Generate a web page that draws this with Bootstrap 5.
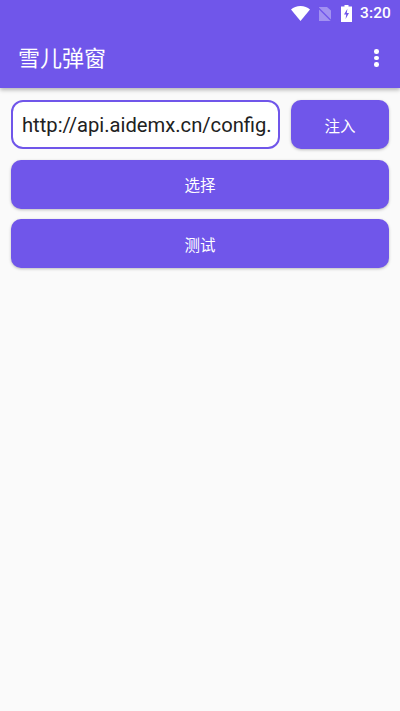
<!DOCTYPE html>
<html lang="zh">
<head>
<meta charset="utf-8">
<title>雪儿弹窗</title>
<link href="https://cdn.jsdelivr.net/npm/bootstrap@5.3.0/dist/css/bootstrap.min.css" rel="stylesheet">
<style>
html,body{height:100%}
body{background:#fafafa;font-family:Roboto,"Noto Sans CJK SC",sans-serif;overflow:hidden}
.app-shell{height:711px}
.app-top{background:#7056ea;height:88px;box-shadow:0 2px 4px rgba(0,0,0,.28);position:relative}
.stat-row{height:27px;padding-right:9px;color:#fff;font-size:15.5px;font-weight:500;letter-spacing:.1px}
.stat-row svg{display:block}
.stat-time{margin-left:8px;line-height:27px}
.tool-row{height:61px;padding:0 21.5px 0 18px}
.app-title{font-size:22px;color:#fff;font-family:"Noto Sans CJK SC",sans-serif;font-weight:400;line-height:1;margin-top:-4px}
.more-dots{gap:2px;margin-top:1px}
.more-dots i{width:4.6px;height:4.6px;border-radius:50%;background:#fff;display:block}
.page-body{padding:12px 11px 0;gap:10.5px}
.url-field{flex:0 0 269px;width:269px;height:49px;border:2px solid #7056ea;border-radius:12px;background:#fff;font-size:20.2px;color:#212121;padding:0 9px;line-height:47px;white-space:nowrap;overflow:hidden}
.act-btn{background:#7056ea;color:#fff;border:0;border-radius:10px;height:49px;font-size:15.5px;font-family:"Noto Sans CJK SC",sans-serif;box-shadow:0 1px 3px rgba(0,0,0,.25);padding:2px 0 0}
.act-btn:hover,.act-btn:focus{background:#7056ea;color:#fff}
.inject-btn{flex:0 0 98px;margin-left:11px}
</style>
</head>
<body>
<div class="app-shell d-flex flex-column">
  <header class="app-top">
    <div class="stat-row d-flex align-items-center justify-content-end">
      <svg width="19" height="15" viewBox="0 0 19 15" style="margin-right:8px"><path d="M0 3.4C2.5 1.3 5.7 0 9.5 0s7 1.3 9.5 3.4L9.5 15z" fill="#fff"/></svg>
      <svg width="13" height="14" viewBox="0 0 13 14" style="margin-right:10px"><path d="M1 0h8l4 3.5V14H1z" fill="#fff" opacity=".35"/><path d="M0 .5l13 13" stroke="#7056ea" stroke-width="1.3"/></svg>
      <svg width="11" height="17" viewBox="0 0 11 17"><path d="M3.5 0h4v1.5H11V17H0V1.5h3.5z" fill="#fff"/><path d="M6.4 3.8L3 9.6h2.2l-.6 4.4L8 8H5.8z" fill="#7056ea"/></svg>
      <span class="stat-time">3:20</span>
    </div>
    <div class="tool-row d-flex align-items-center justify-content-between">
      <div class="app-title">雪儿弹窗</div>
      <div class="more-dots d-flex flex-column"><i></i><i></i><i></i></div>
    </div>
  </header>
  <main class="page-body d-flex flex-column">
    <div class="d-flex">
      <div class="url-field">http://api.aidemx.cn/config.</div>
      <button class="btn act-btn inject-btn" type="button">注入</button>
    </div>
    <button class="btn act-btn w-100" type="button">选择</button>
    <button class="btn act-btn w-100" type="button">测试</button>
  </main>
</div>
<script src="https://cdn.jsdelivr.net/npm/bootstrap@5.3.0/dist/js/bootstrap.bundle.min.js"></script>
</body>
</html>
